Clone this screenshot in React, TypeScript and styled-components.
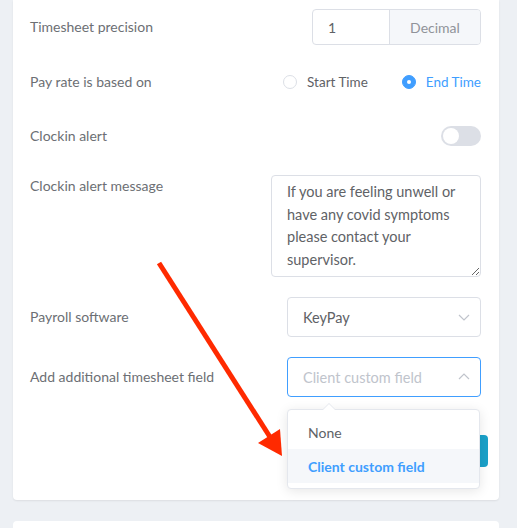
import styled, { createGlobalStyle } from "styled-components";

const GlobalStyle = createGlobalStyle`
    html, body {
        margin: 0;
        padding: 0;
        background: #edf0f4;
        font-family: Lato, "Open Sans", sans-serif;
        overflow: hidden;
    }
`

const Page = styled.div`
    position: relative;
    width: 517px;
    height: 528px;
    padding: 0 18px 0 13px;
    box-sizing: border-box;
    overflow: hidden;
`

const Card = styled.div`
    background: #fff;
    border-radius: 0 0 4px 4px;
    box-shadow: 0 1px 2px rgba(0, 0, 0, 0.08);
    padding: 9px 11px 33px 17px;
`

const NextCard = styled.div`
    background: #fff;
    border-radius: 4px 4px 0 0;
    margin-top: 21px;
    height: 7px;
`

const Row = styled.div<{ $h: number; $mt: number; $top?: boolean }>`
    position: relative;
    display: flex;
    justify-content: space-between;
    align-items: ${p => (p.$top ? "flex-start" : "center")};
    height: ${p => p.$h}px;
    margin-top: ${p => p.$mt}px;
    padding-right: 7px;
`

const Label = styled.div`
    font-size: 14px;
    line-height: 20px;
    color: #6c6f74;
`

const InputGroup = styled.div`
    display: flex;
    width: 169px;
    height: 36px;
    border: 1px solid #dcdfe6;
    border-radius: 4px;
    box-sizing: border-box;
    overflow: hidden;
`

const InputPart = styled.div`
    flex: 0 0 76px;
    padding-left: 15px;
    display: flex;
    align-items: center;
    font-size: 14px;
    color: #606266;
    box-sizing: border-box;
`

const Addon = styled.div`
    flex: 1;
    background: #f5f7fa;
    border-left: 1px solid #dcdfe6;
    display: flex;
    align-items: center;
    justify-content: center;
    font-size: 14px;
    color: #909399;
`

const RadioGroup = styled.div`
    display: flex;
    align-items: center;
    gap: 34px;
`

const RadioItem = styled.label<{ $checked?: boolean }>`
    display: flex;
    align-items: center;
    gap: 10px;
    font-size: 13.5px;
    color: ${p => (p.$checked ? "#409eff" : "#606266")};
`

const RadioDot = styled.span<{ $checked?: boolean }>`
    width: 14px;
    height: 14px;
    border-radius: 50%;
    box-sizing: border-box;
    border: 1px solid ${p => (p.$checked ? "#409eff" : "#dcdfe6")};
    background: ${p => (p.$checked ? "#409eff" : "#fff")};
    display: flex;
    align-items: center;
    justify-content: center;

    &::after {
        content: "";
        width: 4px;
        height: 4px;
        border-radius: 50%;
        background: #fff;
        display: ${p => (p.$checked ? "block" : "none")};
    }
`

const Switch = styled.span`
    position: relative;
    width: 40px;
    height: 20px;
    border-radius: 10px;
    background: #dcdfe6;

    &::after {
        content: "";
        position: absolute;
        top: 2px;
        left: 2px;
        width: 16px;
        height: 16px;
        border-radius: 50%;
        background: #fff;
    }
`

const TextArea = styled.textarea`
    width: 210px;
    height: 102px;
    box-sizing: border-box;
    border: 1px solid #dcdfe6;
    border-radius: 4px;
    padding: 5px 15px;
    font-family: Lato, "Open Sans", sans-serif;
    font-size: 14.5px;
    line-height: 22.5px;
    color: #606266;
    outline: none;
    resize: vertical;
`

const Select = styled.div<{ $active?: boolean }>`
    position: relative;
    width: 194px;
    height: 40px;
    box-sizing: border-box;
    border: 1px solid ${p => (p.$active ? "#409eff" : "#dcdfe6")};
    border-radius: 4px;
    padding: 0 10px 0 15px;
    display: flex;
    align-items: center;
    justify-content: space-between;
    font-size: 14.5px;
`

const SelectText = styled.span<{ $placeholder?: boolean }>`
    color: ${p => (p.$placeholder ? "#c0c4cc" : "#606266")};
`

const Dropdown = styled.div`
    position: absolute;
    top: 51px;
    right: 0;
    width: 193px;
    box-sizing: border-box;
    background: #fff;
    border: 1px solid #e4e7ed;
    border-radius: 4px;
    box-shadow: 0 2px 12px rgba(0, 0, 0, 0.1);
    padding: 5px 0 5px;
    z-index: 2;

    &::before, &::after {
        content: "";
        position: absolute;
        left: 35px;
        border: 6px solid transparent;
        border-top-width: 0;
    }
    &::before {
        top: -7px;
        border-bottom-color: #e4e7ed;
    }
    &::after {
        top: -6px;
        border-bottom-color: #fff;
    }
`

const Option = styled.div<{ $selected?: boolean }>`
    height: 34px;
    padding: 0 20px;
    display: flex;
    align-items: center;
    font-size: 14px;
    font-weight: ${p => (p.$selected ? 700 : 400)};
    color: ${p => (p.$selected ? "#409eff" : "#606266")};
    background: ${p => (p.$selected ? "#f5f7fa" : "transparent")};
`

const Footer = styled.div`
    display: flex;
    justify-content: flex-end;
    margin-top: 38px;
`

const SaveButton = styled.button`
    width: 80px;
    height: 32px;
    border: none;
    border-radius: 4px;
    background: #1aa1c9;
    color: #fff;
    font-size: 14px;
`

const Overlay = styled.svg`
    position: absolute;
    left: 0;
    top: 0;
    pointer-events: none;
    z-index: 3;
`

const Chevron = ({ up }: { up?: boolean }) => (
    <svg width="12" height="12" viewBox="0 0 12 12">
        <polyline
            points={up ? "1,8 6,3 11,8" : "1,4 6,9 11,4"}
            fill="none"
            stroke="#c0c4cc"
            strokeWidth="1.2"
        />
    </svg>
)

const App = () => {
    return (
        <Page>
            <GlobalStyle />
            <Card>
                <Row $h={36} $mt={0}>
                    <Label>Timesheet precision</Label>
                    <InputGroup>
                        <InputPart>1</InputPart>
                        <Addon>Decimal</Addon>
                    </InputGroup>
                </Row>
                <Row $h={36} $mt={19}>
                    <Label>Pay rate is based on</Label>
                    <RadioGroup>
                        <RadioItem>
                            <RadioDot />
                            Start Time
                        </RadioItem>
                        <RadioItem $checked>
                            <RadioDot $checked />
                            End Time
                        </RadioItem>
                    </RadioGroup>
                </Row>
                <Row $h={36} $mt={18}>
                    <Label>Clockin alert</Label>
                    <Switch />
                </Row>
                <Row $h={102} $mt={21} $top>
                    <Label style={{ paddingTop: 1 }}>Clockin alert message</Label>
                    <TextArea
                        readOnly
                        defaultValue="If you are feeling unwell or have any covid symptoms please contact your supervisor."
                    />
                </Row>
                <Row $h={40} $mt={20}>
                    <Label>Payroll software</Label>
                    <Select>
                        <SelectText>KeyPay</SelectText>
                        <Chevron />
                    </Select>
                </Row>
                <Row $h={40} $mt={20}>
                    <Label>Add additional timesheet field</Label>
                    <Select $active>
                        <SelectText $placeholder>Client custom field</SelectText>
                        <Chevron up />
                        <Dropdown>
                            <Option>None</Option>
                            <Option $selected>Client custom field</Option>
                        </Dropdown>
                    </Select>
                </Row>
                <Footer>
                    <SaveButton>Save</SaveButton>
                </Footer>
            </Card>
            <NextCard />
            <Overlay width="517" height="528">
                <line x1="159" y1="263" x2="270" y2="437" stroke="#ff2a00" strokeWidth="5" />
                <polygon points="282,456 258,443 280,429" fill="#ff2a00" />
            </Overlay>
        </Page>
    );
}

export default App;
